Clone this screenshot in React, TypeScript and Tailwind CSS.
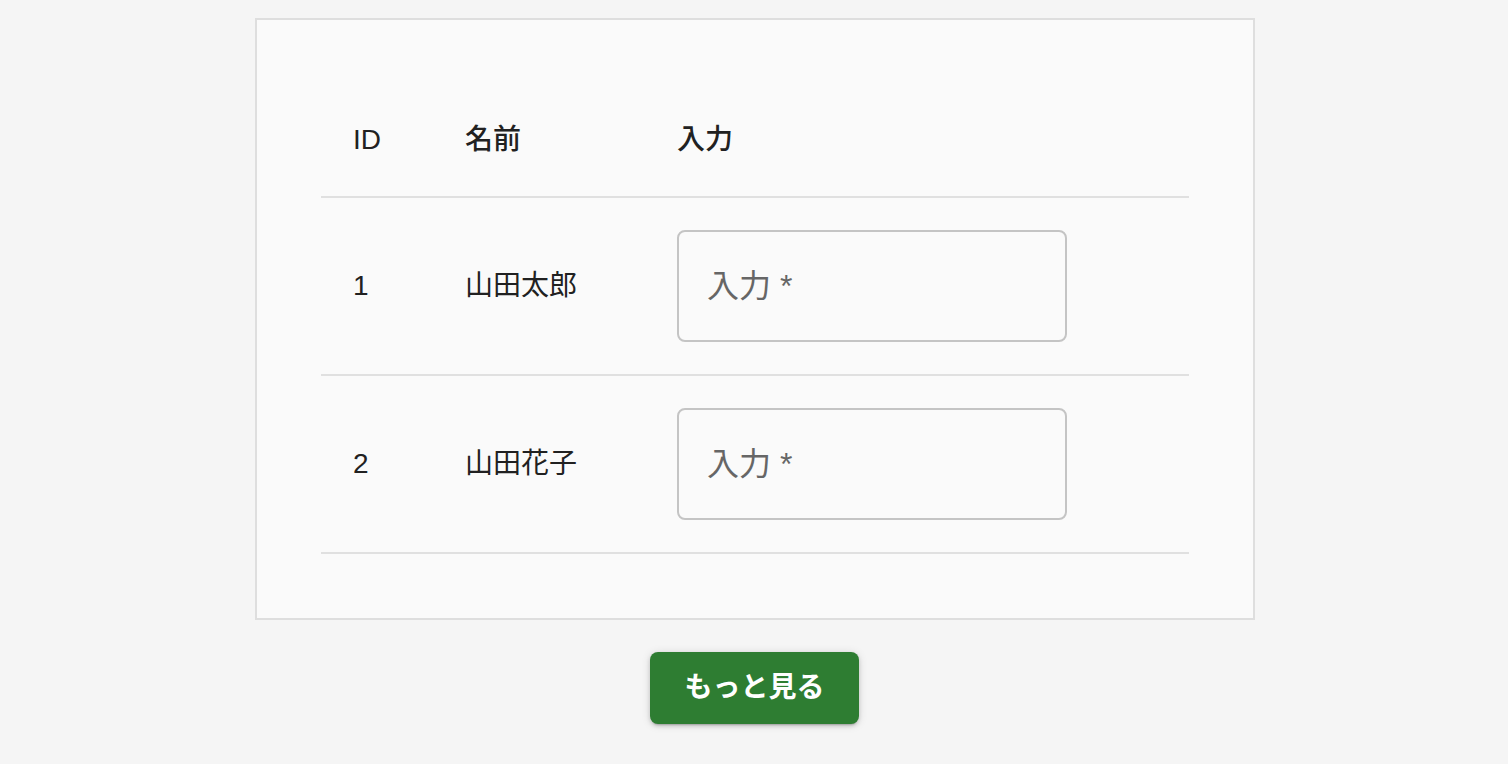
const rows = [
  { id: 1, name: "山田太郎" },
  { id: 2, name: "山田花子" },
];

const font = { fontFamily: '"Liberation Sans", "Noto Sans CJK JP", sans-serif' };

export default function App() {
  return (
    <div
      className="min-h-[764px] bg-[#f5f5f5] flex flex-col items-center pt-[18px] text-[#212121]"
      style={font}
    >
      <div className="w-[1000px] ml-[2px] border-2 border-[#dedede] bg-[#fafafa] p-16">
        <table className="w-full border-collapse text-[28px]">
          <thead>
            <tr className="border-b-2 border-[#e0e0e0]">
              <th className="w-[112px] px-8 py-8 text-left font-medium leading-[48px]">ID</th>
              <th className="w-[212px] px-8 py-8 text-left font-medium leading-[48px]">名前</th>
              <th className="px-8 py-8 text-left font-medium leading-[48px]">入力</th>
            </tr>
          </thead>
          <tbody>
            {rows.map((row) => (
              <tr key={row.id} className="border-b-2 border-[#e0e0e0]">
                <td className="px-8 py-8 leading-[40px]">{row.id}</td>
                <td className="px-8 py-8 leading-[40px]">{row.name}</td>
                <td className="px-8 py-8">
                  <div className="w-[390px] h-[112px] rounded-[8px] border-2 border-[#c4c4c4] flex items-center px-[28px]">
                    <span className="text-[32px] text-[#666666] leading-none">入力 *</span>
                  </div>
                </td>
              </tr>
            ))}
          </tbody>
        </table>
      </div>
      <button className="mt-8 ml-[1px] h-[72px] px-[34px] rounded-[8px] bg-[#2e7d32] text-white text-[28px] font-bold shadow-[0_3px_2px_-2px_rgba(0,0,0,0.2),0_2px_4px_0_rgba(0,0,0,0.14),0_1px_10px_0_rgba(0,0,0,0.12)]">
        もっと見る
      </button>
    </div>
  );
}
